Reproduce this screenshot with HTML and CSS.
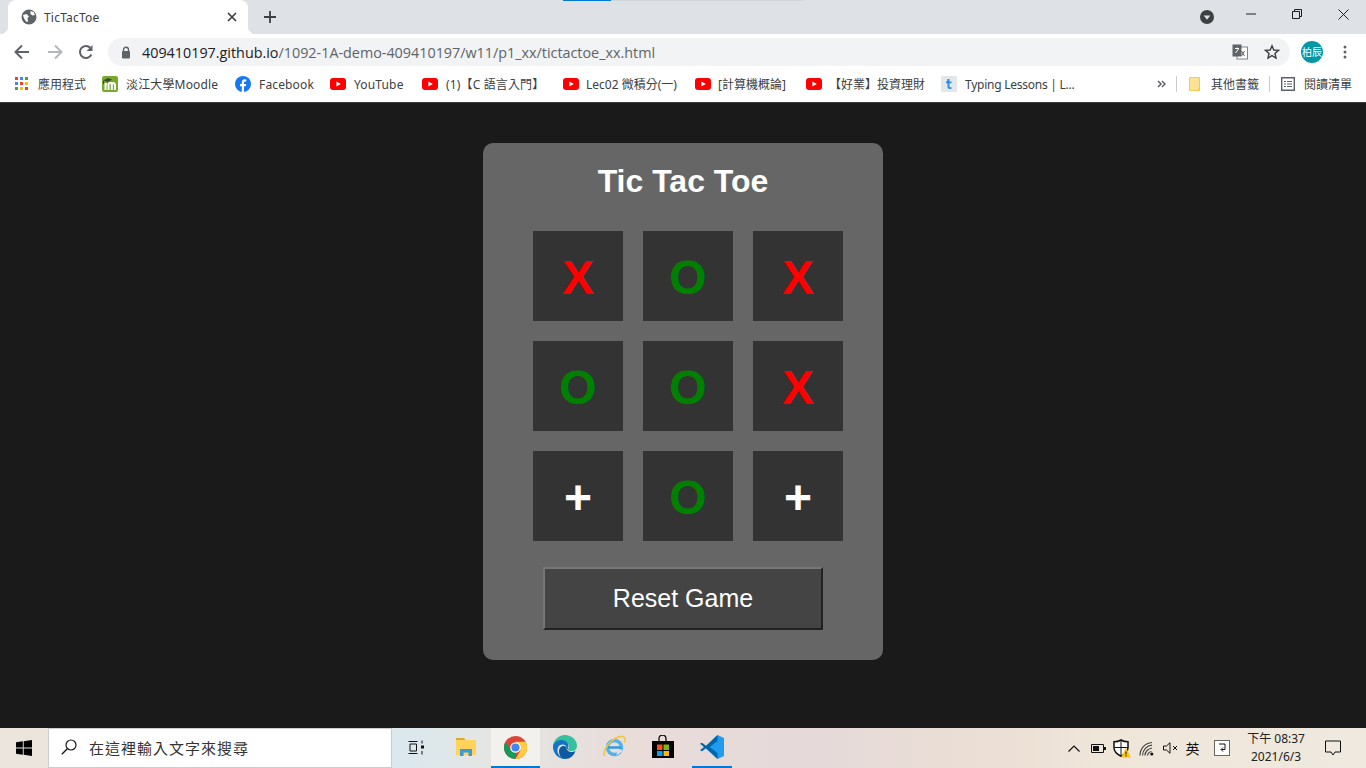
FILE: index.html
```html
<!DOCTYPE html>
<html lang="zh-Hant">
  <head>
    <meta charset="UTF-8" />
    <meta name="viewport" content="width=device-width, initial-scale=1.0" />
    <title>TicTacToe</title>
    <link rel="stylesheet" href="styles.css">
  </head>
  <body>
    <svg class="defs" width="0" height="0" aria-hidden="true">
      <symbol id="yt" viewBox="0 0 16 12">
        <rect width="16" height="12" rx="3" fill="#f00" />
        <path d="M6.4 3.4 10.8 6l-4.4 2.6z" fill="#fff" />
      </symbol>
    </svg>

    <!-- browser chrome -->
    <header class="tabstrip">
      <div class="tab">
        <svg class="tab-globe" width="16" height="16" viewBox="0 0 16 16">
          <circle cx="8" cy="8" r="7.5" fill="#5f6368" />
          <path d="M9.5 2l3 1 1.5 3-2.5.5-2-1.5zM2 6l3.5-1L8 7.5 6.5 9l.5 3.5-1.5.5L3 9.500z" fill="#fff" />
        </svg>
        <span class="tab-title">TicTacToe</span>
        <svg class="tab-close" width="10" height="10" viewBox="0 0 10 10">
          <path d="M1 1l8 8M9 1 1 9" stroke="#3c4043" stroke-width="1.7" />
        </svg>
      </div>
      <svg class="new-tab" width="12" height="12" viewBox="0 0 12 12">
        <path d="M6 0v12M0 6h12" stroke="#3c4043" stroke-width="1.8" />
      </svg>
      <div class="strip-progress"><span></span></div>
      <svg class="profile-drop" width="14" height="14" viewBox="0 0 14 14">
        <circle cx="7" cy="7" r="7" fill="#3c4043" />
        <path d="M3.7 5.5h6.6L7 9.8z" fill="#dee1e6" />
      </svg>
      <div class="win-btn">
        <svg width="10" height="10" viewBox="0 0 10 10"><path d="M0 5h10" stroke="#1f1f1f" /></svg>
      </div>
      <div class="win-btn">
        <svg width="10" height="10" viewBox="0 0 10 10"><path d="M.5 2.5h7v7h-7zM2.5 2.5V.5h7v7h-2" fill="none" stroke="#1f1f1f" /></svg>
      </div>
      <div class="win-btn">
        <svg width="11" height="11" viewBox="0 0 11 11"><path d="M.5.5l10 10M10.5.5l-10 10" stroke="#1f1f1f" /></svg>
      </div>
    </header>

    <div class="toolbar">
      <svg class="nav-icon" width="16" height="16" viewBox="0 0 16 16">
        <path d="M15 8H2M8 1.5 1.5 8 8 14.5" fill="none" stroke="#5f6368" stroke-width="2" />
      </svg>
      <svg class="nav-icon nav-forward" width="16" height="16" viewBox="0 0 16 16">
        <path d="M1 8h13M8 1.5 14.5 8 8 14.5" fill="none" stroke="#b4b7bb" stroke-width="2" />
      </svg>
      <svg class="nav-icon nav-reload" width="16" height="16" viewBox="0 0 16 16">
        <path d="M13.4 10.5A6 6 0 1 1 12.3 3.8" fill="none" stroke="#5f6368" stroke-width="2" />
        <path d="M14.5 1v6h-6z" fill="#5f6368" />
      </svg>
      <div class="omnibox">
        <svg class="lock" width="10" height="13" viewBox="0 0 10 13">
          <path d="M2.5 6V3.700a2.5 2.5 0 0 1 5 0V6" fill="none" stroke="#5f6368" stroke-width="1.4" />
          <rect x="1" y="5" width="8" height="7.5" rx="1" fill="#5f6368" />
        </svg>
        <span class="url"><span class="url-host">409410197.github.io</span>/1092-1A-demo-409410197/w11/p1_xx/tictactoe_xx.html</span>
        <svg class="translate" width="16" height="16" viewBox="0 0 16 16">
          <rect x="5" y="3" width="10.5" height="12" fill="#fff" stroke="#80868b" />
          <rect x="0.5" y="0.5" width="9" height="12" fill="#5f6368" />
          <path d="M3 4.5h4M5 3.5v1M3.5 9 6.5 5" stroke="#fff" fill="none" />
          <path d="M9.5 7l3 5M12.5 7l-3 5" stroke="#5f6368" fill="none" />
        </svg>
        <svg class="star" width="16" height="16" viewBox="0 0 16 16">
          <path d="M8 1.8 9.8 6l4.7.4-3.5 3 1 4.6L8 11.600 4 14l1-4.600-3.500-3L6.200 6z" fill="none" stroke="#3c4043" stroke-width="1.4" />
        </svg>
      </div>
      <div class="avatar">柏辰</div>
      <svg class="menu-dots" width="4" height="14" viewBox="0 0 4 14">
        <circle cx="2" cy="2" r="1.5" fill="#5f6368" />
        <circle cx="2" cy="7" r="1.5" fill="#5f6368" />
        <circle cx="2" cy="12" r="1.5" fill="#5f6368" />
      </svg>
    </div>

    <nav class="bookmarks">
      <div class="bm bm-apps">
        <svg width="14" height="14" viewBox="0 0 14 14">
          <rect width="3" height="3" fill="#ea4335" /><rect x="5" width="3" height="3" fill="#4285f4" /><rect x="10" width="3" height="3" fill="#34a853" />
          <rect y="5" width="3" height="3" fill="#4285f4" /><rect x="5" y="5" width="3" height="3" fill="#ea4335" /><rect x="10" y="5" width="3" height="3" fill="#fbbc05" />
          <rect y="10" width="3" height="3" fill="#34a853" /><rect x="5" y="10" width="3" height="3" fill="#fbbc05" /><rect x="10" y="10" width="3" height="3" fill="#ea4335" />
        </svg>
        <span>應用程式</span>
      </div>
      <div class="bm">
        <svg width="16" height="16" viewBox="0 0 16 16">
          <rect width="16" height="16" rx="2" fill="#78a92f" />
          <path d="M1 4.5 6 2l4 1.500L6 6z" fill="#3f4a35" />
          <path d="M1.500 5v3" stroke="#3f4a35" />
          <path d="M3.500 14V8h1.500M6.500 14V8.500C6.500 7.500 7.500 7 8.500 7h2c1.500 0 2.500 1 2.500 2.500V14M9.800 7.500V14" fill="none" stroke="#fff" stroke-width="2" />
        </svg>
        <span>淡江大學Moodle</span>
      </div>
      <div class="bm">
        <svg width="16" height="16" viewBox="0 0 16 16">
          <circle cx="8" cy="8" r="8" fill="#1877f2" />
          <path d="M6.800 16V10.300H5V8h1.800V6.300c0-2 1.200-3 2.900-3l1.600.1v2h-1.100c-.9 0-1.200.6-1.200 1.200V8h2.200l-.4 2.300H9v5.700z" fill="#fff" />
        </svg>
        <span>Facebook</span>
      </div>
      <div class="bm"><svg width="16" height="12"><use href="#yt" /></svg><span>YouTube</span></div>
      <div class="bm"><svg width="16" height="12"><use href="#yt" /></svg><span>(1)【C 語言入門】</span></div>
      <div class="bm bm-tight"><svg width="16" height="12"><use href="#yt" /></svg><span>Lec02 微積分(一)</span></div>
      <div class="bm bm-tight"><svg width="16" height="12"><use href="#yt" /></svg><span>[計算機概論]</span></div>
      <div class="bm bm-tight"><svg width="16" height="12"><use href="#yt" /></svg><span>【好業】投資理財</span></div>
      <div class="bm bm-typing">
        <svg width="16" height="16" viewBox="0 0 16 16">
          <rect width="16" height="16" rx="1" fill="#e3e7ea" />
          <path d="M6.500 3h2v2.500h2v1.700h-2v3.300c0 .8.800.8 2 .5v1.700c-2.200.6-4 .2-4-2V7.200H5V5.800c1 0 1.500-1.200 1.500-2.800z" fill="#2a8fdd" />
        </svg>
        <span>Typing Lessons | L...</span>
      </div>
      <svg class="chevrons" width="9" height="8" viewBox="0 0 9 8">
        <path d="M1 1l3 3-3 3M5 1l3 3-3 3" fill="none" stroke="#5f6368" stroke-width="1.5" />
      </svg>
      <i class="bm-sep"></i>
      <div class="bm bm-folder">
        <svg width="12" height="14" viewBox="0 0 12 14">
          <path d="M.5.5h10v13H.5z" fill="#fde293" stroke="#f3c95a" />
          <path d="M9 11h2v2.500H9z" fill="#f3c95a" />
        </svg>
        <span>其他書籤</span>
      </div>
      <i class="bm-sep"></i>
      <div class="bm bm-apps">
        <svg width="14" height="14" viewBox="0 0 14 14">
          <path d="M.7.700h12.600v12.600H.7z" fill="none" stroke="#5f6368" stroke-width="1.4" />
          <path d="M3 4h2v1H3zM6 4h5v1H6zM3 6.500h2v1H3zM6 6.500h5v1H6zM3 9h2v1H3zM6 9h5v1H6z" fill="#5f6368" />
        </svg>
        <span>閱讀清單</span>
      </div>
    </nav>

    <!-- the game -->
    <main class="page">
      <section class="game">
        <h1>Tic Tac Toe</h1>
        <div class="board">
          <div class="cell x">X</div>
          <div class="cell o">O</div>
          <div class="cell x">X</div>
          <div class="cell o">O</div>
          <div class="cell o">O</div>
          <div class="cell x">X</div>
          <div class="cell">+</div>
          <div class="cell o">O</div>
          <div class="cell">+</div>
        </div>
        <button type="button" class="reset">Reset Game</button>
      </section>
    </main>

    <!-- windows taskbar -->
    <footer class="taskbar">
      <div class="start">
        <svg width="16" height="16" viewBox="0 0 16 16">
          <path d="M0 2.300 6.800 1.300V7.500H0zM7.700 1.200 16 0v7.500H7.700zM0 8.500h6.800v6.200L0 13.700zM7.700 8.500H16V16L7.700 14.800z" fill="#000" />
        </svg>
      </div>
      <div class="search">
        <svg width="16" height="16" viewBox="0 0 16 16">
          <circle cx="10" cy="6" r="5" fill="none" stroke="#1a1a1a" stroke-width="1.2" />
          <path d="M6.300 9.700.8 15.200" stroke="#1a1a1a" stroke-width="1.4" />
        </svg>
        <span>在這裡輸入文字來搜尋</span>
      </div>
      <div class="task">
        <svg width="17" height="15" viewBox="0 0 17 15">
          <path d="M.5 1.500h9M.5 13.500h9M2 4h6.500v7H2z" fill="none" stroke="#111" />
          <path d="M14 .5v3M14 11v3.500" stroke="#111" />
          <rect x="13" y="5.500" width="3" height="3" fill="#111" />
        </svg>
      </div>
      <div class="task">
        <svg width="22" height="20" viewBox="0 0 22 20">
          <path d="M1 1h8l1.500 2H1z" fill="#e5a82a" />
          <path d="M1 3h20v15H1z" fill="#ffd35c" />
          <path d="M5 12h12v7h-3.500v-3.500h-5V19H5z" fill="#3d9ad6" />
        </svg>
      </div>
      <div class="task task-open">
        <svg width="23" height="23" viewBox="0 0 48 48">
          <circle cx="24" cy="24" r="24" fill="#db4437" />
          <path d="M24 24 3.200 36A24 24 0 0 0 24 48z" fill="#0f9d58" />
          <path d="M24 24 3.200 36A24 24 0 0 1 3.200 12L14 30z" fill="#0f9d58" />
          <path d="M24 12h20.800A24 24 0 0 1 24 48l10.400-18z" fill="#ffcd40" />
          <circle cx="24" cy="24" r="11" fill="#fff" />
          <circle cx="24" cy="24" r="8.5" fill="#4285f4" />
        </svg>
      </div>
      <div class="task">
        <svg width="24" height="24" viewBox="0 0 24 24">
          <path d="M0 12C0 5 5.500 0 12 0c7 0 12 5 12 11 0 3-2.500 5-5.500 5-2 0-3.500-.7-4-1.500 2-1 2-3.500 1-5-1-1.700-3.500-2.500-6-2C5.500 8 3 10.500 2.500 14 1 14 0 13 0 12z" fill="#35c1a0" />
          <path d="M0 12c0-3 3-7 8-7 4.500 0 7.500 2.800 7.500 6 0 1.500-.5 2.700-1 3.500-.5-.5-1-1-1-2 0-1.500-1.500-3-4-3-3.500 0-5 3-5 6 0 3.500 2.500 7 7 8.500C6 24 0 19 0 12z" fill="#1373c4" />
          <path d="M6 16c0-3 2-5 4.500-5 1.700 0 3 .8 3 2 0 2 2 4 5 4 1.500 0 3-.5 4-1.500C21 21 17 24 12 24 8 24 6 20 6 16z" fill="#0c59a4" />
        </svg>
      </div>
      <div class="task">
        <svg width="24" height="24" viewBox="0 0 24 24">
          <circle cx="12.500" cy="12.500" r="7" fill="none" stroke="#4fb4ee" stroke-width="3.500" />
          <path d="M6 12.500h13" stroke="#2e9be0" stroke-width="2.500" />
          <path d="M14.500 20.500 21 16l-3-2-3 3z" fill="#e8dcd8" />
          <path d="M2.500 21C1 17 4 11 9 6.500c5-4.500 11-6.500 13.500-4 1.300 1.300 .5 3.500-.5 5" fill="none" stroke="#f2c641" stroke-width="1.600" />
        </svg>
      </div>
      <div class="task">
        <svg width="24" height="24" viewBox="0 0 24 24">
          <path d="M8 6V3.500a3.500 3.500 0 0 1 7 0V6" fill="none" stroke="#111" stroke-width="1.3" />
          <path d="M1 6h22v17H1z" fill="#000" />
          <path d="M6 9.500h5.500V15H6z" fill="#f25022" />
          <path d="M12.500 9.500H18V15h-5.500z" fill="#7fba00" />
          <path d="M6 16h5.500v5H6z" fill="#00a4ef" />
          <path d="M12.500 16H18v5h-5.500z" fill="#ffb900" />
        </svg>
      </div>
      <div class="task task-running">
        <svg width="24" height="24" viewBox="0 0 24 24">
          <path d="M17.500 0 24 3v18l-6.500 3L5 12.500z" fill="#1f9cf0" />
          <path d="M17.500 0 6 10.800 2 7.700 0 8.800 4 12 0 15.200l2 1.100 4-3.100L17.500 24V18L9.800 12l7.700-6z" fill="#0065a9" />
        </svg>
      </div>
      <div class="tray">
        <svg width="12" height="7" viewBox="0 0 12 7"><path d="M.5 6.500 6 1l5.500 5.500" fill="none" stroke="#111" stroke-width="1.2" /></svg>
        <svg width="15" height="9" viewBox="0 0 15 9">
          <path d="M.5.500h12v8H.5z" fill="none" stroke="#111" />
          <path d="M2 2h6v5H2z" fill="#111" />
          <path d="M13 3h2v3h-2z" fill="#111" />
        </svg>
        <svg width="18" height="19" viewBox="0 0 18 19">
          <path d="M8 1c2 1.300 4.500 1.800 7 1.800v5.700c0 4-3 6.800-7 8.700-4-1.900-7-4.700-7-8.700V2.800C3.500 2.800 6 2.300 8 1z" fill="#fff" stroke="#111" stroke-width="1.500" />
          <path d="M8 1.500v15M1.500 8.500H15" stroke="#111" />
          <path d="M13 8.500l5 10H8z" fill="#fcc419" />
          <path d="M13 12.500v3M13 16.300v1.200" stroke="#111" />
        </svg>
        <svg width="15" height="15" viewBox="0 0 15 15">
          <path d="M1 14.500C1 7.500 6 2 13 1.500M3.500 14.500C3.500 9 8 4.500 13 4.200M6 14.500c0-3.800 3.300-7 7-7.500M8.500 14.500c0-1.800 2-3.800 4-4" fill="none" stroke="#444" stroke-width="1.200" />
          <circle cx="12.800" cy="13" r="1.600" fill="#111" />
        </svg>
        <svg width="15" height="12" viewBox="0 0 15 12">
          <path d="M.5 4h3l3.500-3.300v10.600L3.500 8h-3z" fill="none" stroke="#111" />
          <path d="M10 4l4 4M14 4l-4 4" stroke="#111" />
        </svg>
        <span class="tray-ime">英</span>
        <div class="tray-box">
          <svg width="9" height="11" viewBox="0 0 9 11"><path d="M1 1h6v5.500H3.500M5 4.500 3 6.500l2 2" fill="none" stroke="#111" /></svg>
        </div>
        <div class="clock">
          <span>下午 08:37</span>
          <span>2021/6/3</span>
        </div>
        <svg width="16" height="16" viewBox="0 0 16 16">
          <path d="M.5 1h15v11h-5.500L8 15l-2-3H.5z" fill="none" stroke="#111" />
        </svg>
      </div>
    </footer>
  </body>
</html>
```

FILE: styles.css
```css
* {
  margin: 0;
  padding: 0;
  box-sizing: border-box;
}

body {
  width: 1366px;
  height: 768px;
  overflow: hidden;
  display: flex;
  flex-direction: column;
  font-family: "Noto Sans", "Noto Sans CJK TC", sans-serif;
  background-color: #1a1a1a;
}

svg {
  display: block;
  flex: none;
}

.defs {
  position: absolute;
}

/* tab strip */
.tabstrip {
  height: 34px;
  background-color: #dee1e6;
  display: flex;
  align-items: center;
  position: relative;
}

.tab {
  width: 240px;
  height: 34px;
  margin-left: 8px;
  background-color: #fff;
  border-radius: 8px 8px 0 0;
  display: flex;
  align-items: center;
  padding: 0 11px 0 13px;
  position: relative;
}

.tab::before,
.tab::after {
  content: "";
  position: absolute;
  bottom: 0;
  width: 8px;
  height: 8px;
}

.tab::before {
  left: -8px;
  background: radial-gradient(circle at 0 0, #dee1e6 8px, #fff 8.5px);
}

.tab::after {
  right: -8px;
  background: radial-gradient(circle at 100% 0, #dee1e6 8px, #fff 8.5px);
}

.tab-title {
  flex: 1;
  margin-left: 7px;
  font-size: 12px;
  letter-spacing: 0.2px;
  color: #3c4043;
}

.new-tab {
  margin-left: 16px;
}

.strip-progress {
  position: absolute;
  left: 563px;
  top: 0;
  width: 241px;
  height: 1px;
  background-color: #d4d7da;
}

.strip-progress span {
  display: block;
  width: 48px;
  height: 1px;
  background-color: #0078d7;
}

.profile-drop {
  margin-left: auto;
  margin-right: 14px;
}

.win-btn {
  width: 46px;
  height: 28px;
  margin-bottom: 6px;
  display: flex;
  align-items: center;
  justify-content: center;
}

/* toolbar */
.toolbar {
  height: 32px;
  background-color: #fff;
  display: flex;
  align-items: flex-end;
  padding-left: 14px;
}

.nav-icon {
  margin: 0 17px 6px 0;
}

.nav-forward {
  margin-right: 15px;
}

.nav-reload {
  margin-right: 14px;
}

.omnibox {
  width: 1182px;
  height: 28px;
  border-radius: 14px;
  background-color: #f1f3f4;
  display: flex;
  align-items: center;
  padding-left: 13px;
}

.url {
  flex: 1;
  margin-left: 11px;
  font-family: "Open Sans", sans-serif;
  font-size: 14.35px;
  color: #5f6368;
  white-space: nowrap;
}

.url-host {
  color: #202124;
}

.translate {
  margin-right: 16px;
}

.star {
  margin-right: 10px;
}

.avatar {
  width: 22px;
  height: 22px;
  margin: 0 0 3px 11px;
  border-radius: 50%;
  background-color: #0097a7;
  color: #fff;
  font-size: 10px;
  line-height: 22px;
  text-align: center;
}

.menu-dots {
  margin: 0 0 7px 20px;
}

/* bookmarks */
.bookmarks {
  height: 37px;
  background-color: #fff;
  border-bottom: 1px solid #3c3c3c;
  display: grid;
  grid-template-columns: 87px 133px 95px 92px 141px 132px 111px 135px 216px 19px 13px 80px 12px 1fr;
  align-items: center;
  padding-left: 15px;
  font-size: 12px;
  letter-spacing: 0.15px;
  color: #3c4043;
}

.bm {
  display: flex;
  align-items: center;
  gap: 8px;
  white-space: nowrap;
}

.bm-apps {
  gap: 9px;
  letter-spacing: 0;
}

.bm-tight {
  gap: 7px;
  letter-spacing: 0;
}

.bm-folder {
  gap: 10px;
  letter-spacing: 0;
}

.bm-typing {
  letter-spacing: -0.25px;
}

.bm-sep {
  width: 1px;
  height: 16px;
  background-color: #c8cacd;
}

/* the game */
.page {
  flex: 1;
  background-color: #1a1a1a;
  display: flex;
  justify-content: center;
  padding-top: 40px;
  font-family: "Liberation Sans", Arial, sans-serif;
}

.game {
  width: 400px;
  height: 517px;
  padding-top: 20px;
  background-color: #666;
  border-radius: 10px;
  display: flex;
  flex-direction: column;
  align-items: center;
}

.game h1 {
  font-size: 32px;
  line-height: 37px;
  color: #fff;
}

.board {
  display: grid;
  grid-template-columns: repeat(3, 90px);
  grid-auto-rows: 90px;
  gap: 20px;
  margin: 31px 0 0 10px;
}

.cell {
  padding-top: 2px;
  background-color: #333;
  color: #fff;
  font-size: 48px;
  font-weight: bold;
  display: flex;
  align-items: center;
  justify-content: center;
}

.cell.x {
  color: red;
}

.cell.o {
  color: green;
}

.reset {
  width: 280px;
  height: 63px;
  margin-top: 26px;
  background-color: #444;
  color: #fff;
  font-family: inherit;
  font-size: 25px;
  border: 2px solid;
  border-color: #767676 #222 #222 #767676;
}

/* taskbar */
.taskbar {
  height: 40px;
  display: flex;
  align-items: stretch;
  background: linear-gradient(90deg, #ece5dd 0, #e9e3da 180px, #dbe8ee 400px, #e3e6e4 480px, #e9dcd9 640px, #e5d9da 800px, #ecdfd5 1000px, #efe6da 1100px, #efe9df 1366px);
}

.start {
  width: 48px;
  display: flex;
  align-items: center;
  justify-content: center;
}

.search {
  width: 344px;
  background-color: #fff;
  border: 1px solid #ccc;
  display: flex;
  align-items: center;
  padding: 0 0 2px 12px;
  gap: 12px;
  font-size: 15px;
  letter-spacing: 1px;
  color: #333;
}

.task {
  width: 49.3px;
  display: flex;
  align-items: center;
  justify-content: center;
  border-bottom: 2px solid transparent;
}

.task-open {
  background-color: #f3f1ee;
  border-bottom-color: #0078d7;
}

.task-running {
  border-bottom: 0;
  padding-bottom: 2px;
  background: linear-gradient(#0078d7, #0078d7) center bottom / 40px 2px no-repeat;
}

.tray {
  flex: 1;
  display: grid;
  grid-template-columns: 24px 24px 23px 26px 22px 23px 36px 72px 42px;
  justify-items: center;
  align-items: center;
  padding-left: 325px;
}

.tray-ime {
  font-size: 14px;
  color: #111;
}

.tray-box {
  width: 16px;
  height: 16px;
  border: 1px solid #666;
  background-color: #fff;
  display: flex;
  align-items: center;
  justify-content: center;
}

.clock {
  display: flex;
  flex-direction: column;
  align-items: center;
  font-size: 12px;
  line-height: 18px;
  color: #222;
  white-space: nowrap;
}
```
